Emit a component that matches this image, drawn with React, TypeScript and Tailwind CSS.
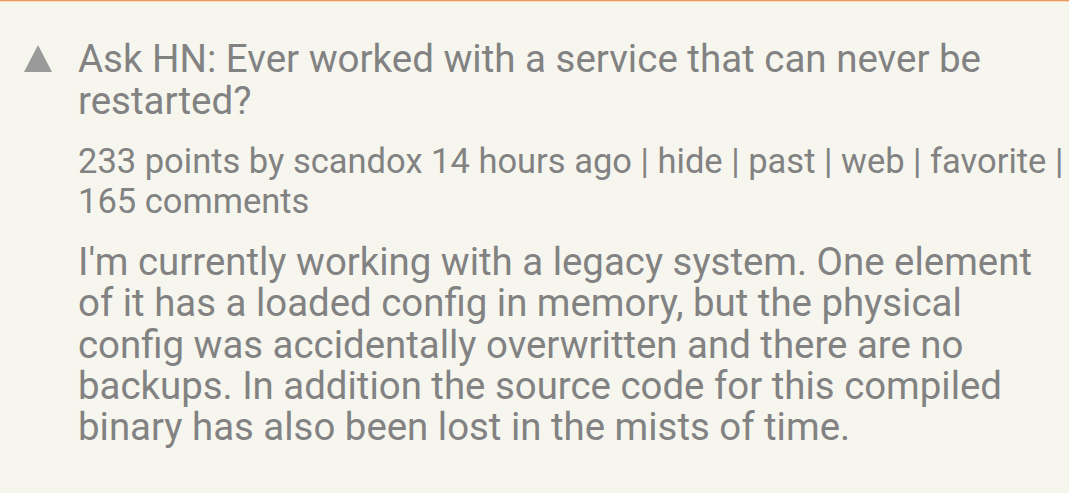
export default function App() {
  return (
    <div className="min-h-screen bg-[#f6f6ef] font-['Roboto',sans-serif] text-[#828282]">
      {/* orange top rule */}
      <div className="h-[1px] bg-[#e89a5c]" />
      <div className="h-[1px] bg-[#f8d9b8]" />

      <div className="flex pt-[36px]">
        {/* vote arrow */}
        <div className="w-[78px] shrink-0 pl-[24px] pt-[7px]">
          <svg width="28" height="27" viewBox="0 0 28 27">
            <polygon points="14,0 28,27 0,27" fill="#9a9a9a" />
          </svg>
        </div>

        <div className="pr-[4px]">
          <h1 className="text-[38.5px] leading-[41.5px]">
            Ask HN: Ever worked with a service that can never be restarted?
          </h1>
          <p className="mt-[21px] text-[34.5px] leading-[39.5px]">
            233 points by scandox 14 hours ago | hide | past | web | favorite | 165 comments
          </p>
          <p className="mt-[20px] text-[38.4px] leading-[41.25px]">
            I'm currently working with a legacy system. One element of it has a loaded
            config in memory, but the physical config was accidentally overwritten and
            there are no backups. In addition the source code for this compiled binary
            has also been lost in the mists of time.
          </p>
        </div>
      </div>
    </div>
  );
}
